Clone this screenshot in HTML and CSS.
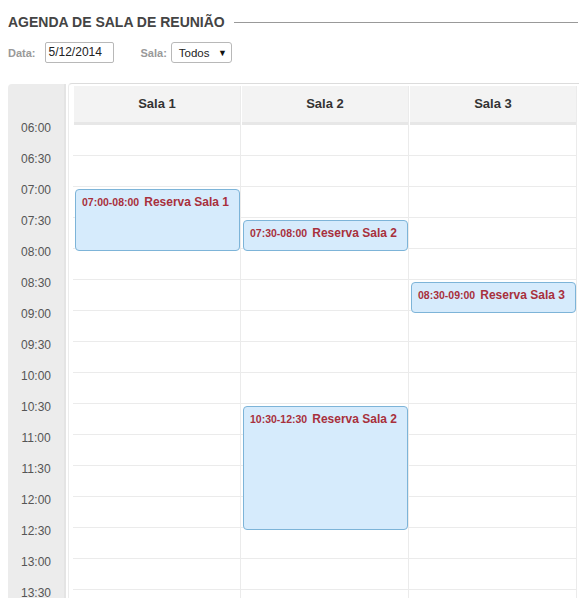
FILE: index.html
```html
<!DOCTYPE html>
<html lang="pt">
<head>
<meta charset="utf-8">
<title>Agenda de Sala de Reunião</title>
<link rel="stylesheet" href="styles.css">
</head>
<body>
<div class="title-row">
  <h1 class="title">AGENDA DE SALA DE REUNIÃO</h1>
  <span class="title-line"></span>
</div>
<div class="filters">
  <label class="flabel">Data:</label>
  <span class="input">5/12/2014</span>
  <label class="flabel sala">Sala:</label>
  <span class="select"><span>Todos</span><span class="arrow">▼</span></span>
</div>
<div class="calendar">
  <div class="times">
    <div class="time">06:00</div><div class="time">06:30</div>
    <div class="time">07:00</div><div class="time">07:30</div>
    <div class="time">08:00</div><div class="time">08:30</div>
    <div class="time">09:00</div><div class="time">09:30</div>
    <div class="time">10:00</div><div class="time">10:30</div>
    <div class="time">11:00</div><div class="time">11:30</div>
    <div class="time">12:00</div><div class="time">12:30</div>
    <div class="time">13:00</div><div class="time">13:30</div>
    <div class="time">14:00</div><div class="time">14:30</div>
  </div>
  <div class="main">
    <div class="col">
      <div class="head">Sala 1</div>
      <div class="body">
        <div class="row"></div><div class="row"></div><div class="row"></div><div class="row"></div>
        <div class="row"></div><div class="row"></div><div class="row"></div><div class="row"></div>
        <div class="row"></div><div class="row"></div><div class="row"></div><div class="row"></div>
        <div class="row"></div><div class="row"></div><div class="row"></div><div class="row"></div>
        <div class="row"></div><div class="row"></div>
        <div class="event" style="top:64px;height:62px"><span class="etime">07:00-08:00</span><span class="ename">Reserva Sala 1</span></div>
      </div>
    </div>
    <div class="col">
      <div class="head">Sala 2</div>
      <div class="body">
        <div class="row"></div><div class="row"></div><div class="row"></div><div class="row"></div>
        <div class="row"></div><div class="row"></div><div class="row"></div><div class="row"></div>
        <div class="row"></div><div class="row"></div><div class="row"></div><div class="row"></div>
        <div class="row"></div><div class="row"></div><div class="row"></div><div class="row"></div>
        <div class="row"></div><div class="row"></div>
        <div class="event" style="top:95px;height:31px"><span class="etime">07:30-08:00</span><span class="ename">Reserva Sala 2</span></div>
        <div class="event" style="top:281px;height:124px"><span class="etime">10:30-12:30</span><span class="ename">Reserva Sala 2</span></div>
      </div>
    </div>
    <div class="col">
      <div class="head">Sala 3</div>
      <div class="body">
        <div class="row"></div><div class="row"></div><div class="row"></div><div class="row"></div>
        <div class="row"></div><div class="row"></div><div class="row"></div><div class="row"></div>
        <div class="row"></div><div class="row"></div><div class="row"></div><div class="row"></div>
        <div class="row"></div><div class="row"></div><div class="row"></div><div class="row"></div>
        <div class="row"></div><div class="row"></div>
        <div class="event" style="top:157px;height:31px"><span class="etime">08:30-09:00</span><span class="ename">Reserva Sala 3</span></div>
      </div>
    </div>
  </div>
</div>
</body>
</html>
```
FILE: styles.css
```css
html, body {
  margin: 0;
  padding: 0;
  background: #fff;
}
body {
  margin: 8px;
  font-family: "Liberation Sans", Arial, sans-serif;
  color: #333;
}
.title-row {
  display: flex;
  align-items: center;
  padding-top: 6px;
}
.title {
  margin: 0;
  font-size: 14px;
  line-height: 16px;
  font-weight: bold;
  color: #444;
}
.title-line {
  flex: 1;
  height: 1px;
  background: #999;
  margin-left: 9px;
  margin-right: 1px;
}
.filters {
  display: flex;
  align-items: center;
  margin-top: 12px;
  height: 21px;
}
.flabel {
  font-size: 11px;
  font-weight: bold;
  color: #999;
  margin-right: 9px;
}
.flabel.sala {
  margin-left: 27px;
  margin-right: 4px;
}
.input {
  box-sizing: border-box;
  width: 69px;
  height: 21px;
  border: 1px solid #b8b8b8;
  border-radius: 2px;
  padding: 0 0 0 3px;
  font-size: 12px;
  line-height: 19px;
  color: #222;
}
.select {
  box-sizing: border-box;
  display: flex;
  align-items: center;
  justify-content: space-between;
  width: 61px;
  height: 21px;
  border: 1px solid #b8b8b8;
  border-radius: 3px;
  padding: 0 4px 0 7px;
  font-size: 11.5px;
  color: #222;
}
.arrow {
  font-size: 9px;
  color: #111;
}
.calendar {
  display: flex;
  margin-top: 20px;
}
.times {
  box-sizing: border-box;
  width: 58px;
  margin-top: 1px;
  padding-top: 37px;
  background: #ececec;
  border-right: 2px solid #e4e4e4;
  border-top-left-radius: 4px;
  flex-shrink: 0;
}
.time {
  height: 31px;
  font-size: 12px;
  line-height: 14px;
  color: #555;
  text-align: center;
}
.main {
  flex: 1;
  display: flex;
  margin-left: 2px;
  padding: 2px 0 0 4px;
  border-top: 1px solid #dcdcdc;
  border-left: 1px solid #ececec;
  border-top-left-radius: 4px;
  overflow: hidden;
}
.col {
  width: 167px;
  border-right: 1px solid #ebebeb;
  flex-shrink: 0;
}
.head {
  margin-left: 1px;
  height: 36px;
  line-height: 36px;
  background: #f3f3f3;
  border-bottom: 3px solid #e7e7e7;
  text-align: center;
  font-size: 13px;
  font-weight: bold;
  color: #333;
}
.body {
  position: relative;
}
.row {
  height: 30px;
  border-bottom: 1px solid #ebebeb;
}
.event {
  position: absolute;
  left: 2px;
  right: 0;
  box-sizing: border-box;
  background: #d6ebfc;
  border: 1px solid #7db4d8;
  border-radius: 4px;
  padding: 2px 0 0 6px;
  white-space: nowrap;
  color: #a8303c;
  font-weight: bold;
}
.etime {
  font-size: 10.5px;
  margin-right: 5px;
}
.ename {
  font-size: 12px;
}
```
